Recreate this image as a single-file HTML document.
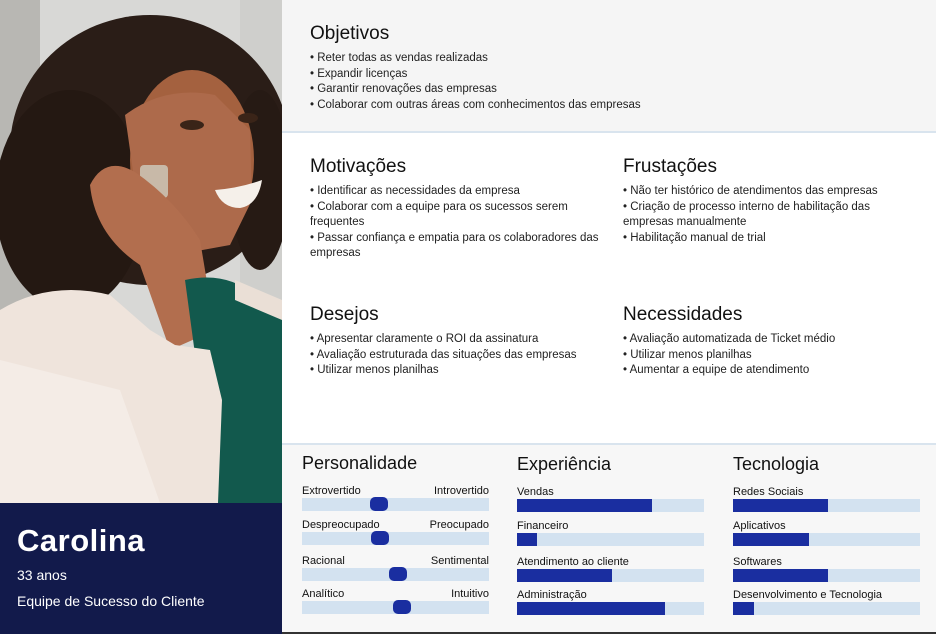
<!DOCTYPE html>
<html><head><meta charset="utf-8"><style>
*{margin:0;padding:0;box-sizing:border-box}
body{width:936px;height:634px;overflow:hidden;font-family:"Liberation Sans","DejaVu Sans",sans-serif;background:#fff;position:relative;color:#1a1a1a}
.abs{position:absolute}
.photo{left:0;top:0;width:282px;height:503px;overflow:hidden;background:#dcdcdc}
.navy{left:0;top:503px;width:282px;height:131px;background:#121a4b;color:#fff}
.navy h1{position:absolute;left:17px;top:20px;font-size:31px;font-weight:bold;letter-spacing:.5px}
.navy .a{position:absolute;left:17px;top:64px;font-size:14px}
.navy .b{position:absolute;left:17px;top:90px;font-size:14px}
h2{font-weight:normal;font-size:19px;position:absolute;color:#111}
ul{list-style:none;position:absolute;font-size:11.5px;line-height:15.6px;color:#222}
.top{left:282px;top:0;width:654px;height:133px;background:#f5f5f5;border-bottom:2px solid #d9e4ee}
.bot{left:282px;top:443px;width:654px;height:191px;background:#f7f7f7;border-top:2px solid #d9e4ee;border-bottom:2px solid #333}
h3{font-weight:normal;font-size:18px;position:absolute;color:#111}
.lbl{position:absolute;font-size:11px;color:#111}
.trk{position:absolute;height:13px;background:#d3e2f0}
.fill{position:absolute;left:0;top:0;height:13px;background:#1a2ea0}
.knob{position:absolute;top:-1px;width:18px;height:14px;border-radius:5px;background:#1a2ea0}
</style></head><body>
<div class="abs photo">
<svg width="282" height="503" viewBox="0 0 282 503">
<rect width="282" height="503" fill="#d8d8d6"/>
<rect x="0" y="0" width="40" height="503" fill="#b8b7b3"/>
<rect x="240" y="0" width="42" height="330" fill="#cfcfcc"/>
<ellipse cx="150" cy="150" rx="140" ry="135" fill="#2a1d17"/>
<ellipse cx="70" cy="200" rx="75" ry="110" fill="#241812"/>
<ellipse cx="260" cy="180" rx="30" ry="90" fill="#261a14"/>
<ellipse cx="192" cy="160" rx="62" ry="90" fill="#a4613f"/>
<path d="M125 115 Q165 85 215 95 L250 130 L252 200 L230 245 L175 255 L140 220 Z" fill="#ad6a4b"/>
<path d="M215 190 Q240 188 262 180 Q258 205 240 208 Q222 208 215 190Z" fill="#f5f0ea"/>
<ellipse cx="192" cy="125" rx="12" ry="5" fill="#3a2418"/>
<ellipse cx="248" cy="118" rx="10" ry="5" fill="#3a2418"/>
<rect x="140" y="165" width="28" height="33" rx="4" fill="#c8b9a8"/>
<path d="M90 185 Q105 155 135 172 Q175 200 200 240 L215 330 L170 350 L140 265 Q95 235 90 185Z" fill="#b26e4e"/>
<path d="M185 280 Q230 270 260 300 L282 310 L282 503 L215 503 Z" fill="#12594d"/>
<path d="M0 310 Q50 280 110 295 L150 330 L175 345 L210 350 L222 400 L218 503 L0 503Z" fill="#efe4dc"/>
<path d="M235 280 L282 300 L282 320 L235 300Z" fill="#eadfd6"/>
<path d="M0 360 L120 390 L160 503 L0 503Z" fill="#f4ece6"/>
</svg>
</div>
<div class="abs navy"><h1>Carolina</h1><div class="a">33 anos</div><div class="b">Equipe de Sucesso do Cliente</div></div>

<div class="abs top"></div>
<h2 style="left:310px;top:23px">Objetivos</h2>
<ul style="left:310px;top:51px"><li>• Reter todas as vendas realizadas</li><li>• Expandir licenças</li><li>• Garantir renovações das empresas</li><li>• Colaborar com outras áreas com conhecimentos das empresas</li></ul>

<h2 style="left:310px;top:156px">Motivações</h2>
<ul style="left:310px;top:184px;width:290px"><li>• Identificar as necessidades da empresa</li><li>• Colaborar com a equipe para os sucessos serem frequentes</li><li>• Passar confiança e empatia para os colaboradores das empresas</li></ul>
<h2 style="left:623px;top:156px">Frustações</h2>
<ul style="left:623px;top:184px;width:270px"><li>• Não ter histórico de atendimentos das empresas</li><li>• Criação de processo interno de habilitação das empresas manualmente</li><li>• Habilitação manual de trial</li></ul>
<h2 style="left:310px;top:304px">Desejos</h2>
<ul style="left:310px;top:332px"><li>• Apresentar claramente o ROI da assinatura</li><li>• Avaliação estruturada das situações das empresas</li><li>• Utilizar menos planilhas</li></ul>
<h2 style="left:623px;top:304px">Necessidades</h2>
<ul style="left:623px;top:332px"><li>• Avaliação automatizada de Ticket médio</li><li>• Utilizar menos planilhas</li><li>• Aumentar a equipe de atendimento</li></ul>

<div class="abs bot"></div>
<h3 style="left:302px;top:453px">Personalidade</h3>
<h3 style="left:517px;top:454px">Experiência</h3>
<h3 style="left:733px;top:454px">Tecnologia</h3>

<div class="lbl" style="left:302px;top:485px">Extrovertido</div><div class="lbl" style="left:302px;top:485px;width:187px;text-align:right">Introvertido</div>
<div class="trk" style="left:302px;top:498px;width:187px"><div class="knob" style="left:68px"></div></div>
<div class="lbl" style="left:302px;top:519px">Despreocupado</div><div class="lbl" style="left:302px;top:519px;width:187px;text-align:right">Preocupado</div>
<div class="trk" style="left:302px;top:532px;width:187px"><div class="knob" style="left:69px"></div></div>
<div class="lbl" style="left:302px;top:555px">Racional</div><div class="lbl" style="left:302px;top:555px;width:187px;text-align:right">Sentimental</div>
<div class="trk" style="left:302px;top:568px;width:187px"><div class="knob" style="left:87px"></div></div>
<div class="lbl" style="left:302px;top:588px">Analítico</div><div class="lbl" style="left:302px;top:588px;width:187px;text-align:right">Intuitivo</div>
<div class="trk" style="left:302px;top:601px;width:187px"><div class="knob" style="left:91px"></div></div>

<div class="lbl" style="left:517px;top:486px">Vendas</div>
<div class="trk" style="left:517px;top:499px;width:187px"><div class="fill" style="width:135px"></div></div>
<div class="lbl" style="left:517px;top:520px">Financeiro</div>
<div class="trk" style="left:517px;top:533px;width:187px"><div class="fill" style="width:20px"></div></div>
<div class="lbl" style="left:517px;top:556px">Atendimento ao cliente</div>
<div class="trk" style="left:517px;top:569px;width:187px"><div class="fill" style="width:95px"></div></div>
<div class="lbl" style="left:517px;top:589px">Administração</div>
<div class="trk" style="left:517px;top:602px;width:187px"><div class="fill" style="width:148px"></div></div>

<div class="lbl" style="left:733px;top:486px">Redes Sociais</div>
<div class="trk" style="left:733px;top:499px;width:187px"><div class="fill" style="width:95px"></div></div>
<div class="lbl" style="left:733px;top:520px">Aplicativos</div>
<div class="trk" style="left:733px;top:533px;width:187px"><div class="fill" style="width:76px"></div></div>
<div class="lbl" style="left:733px;top:556px">Softwares</div>
<div class="trk" style="left:733px;top:569px;width:187px"><div class="fill" style="width:95px"></div></div>
<div class="lbl" style="left:733px;top:589px">Desenvolvimento e Tecnologia</div>
<div class="trk" style="left:733px;top:602px;width:187px"><div class="fill" style="width:21px"></div></div>
</body></html>
